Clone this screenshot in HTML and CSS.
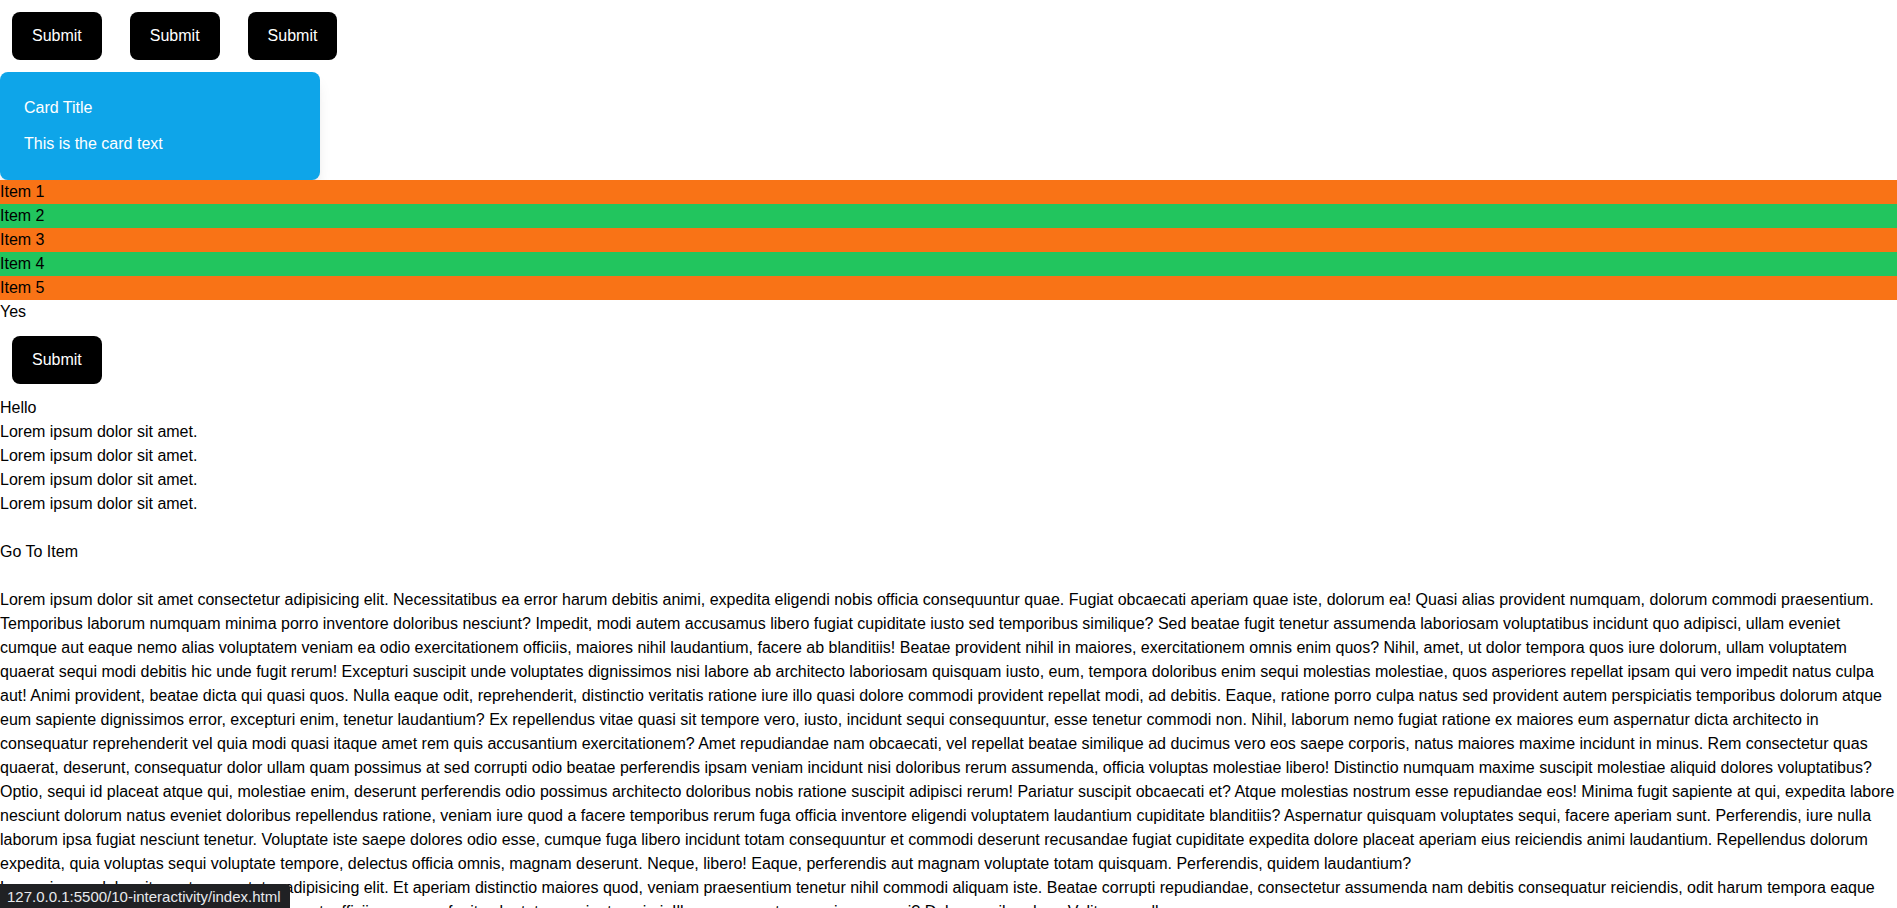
FILE: index.html
```html
<!DOCTYPE html>
<html lang="en">
<head>
<meta charset="utf-8">
<title>Interactivity</title>
<link rel="stylesheet" href="styles.css">
</head>
<body>
<div class="btn-row">
  <button class="btn">Submit</button>
  <button class="btn">Submit</button>
  <button class="btn">Submit</button>
</div>
<div class="card">
  <div class="card-title">Card Title</div>
  <div class="card-text">This is the card text</div>
</div>
<ul class="items">
  <li class="item odd">Item 1</li>
  <li class="item even">Item 2</li>
  <li class="item odd">Item 3</li>
  <li class="item even">Item 4</li>
  <li class="item odd">Item 5</li>
</ul>
<div class="line">Yes</div>
<div class="btn-row">
  <button class="btn">Submit</button>
</div>
<div class="line">Hello</div>
<div class="line">Lorem ipsum dolor sit amet.</div>
<div class="line">Lorem ipsum dolor sit amet.</div>
<div class="line">Lorem ipsum dolor sit amet.</div>
<div class="line">Lorem ipsum dolor sit amet.</div>
<div class="goto"><a class="goto-link">Go To Item</a></div>
<div class="text">
<p>Lorem ipsum dolor sit amet consectetur adipisicing elit. Necessitatibus ea error harum debitis animi, expedita eligendi nobis officia consequuntur quae. Fugiat obcaecati aperiam quae iste, dolorum ea! Quasi alias provident numquam, dolorum commodi praesentium. Temporibus laborum numquam minima porro inventore doloribus nesciunt? Impedit, modi autem accusamus libero fugiat cupiditate iusto sed temporibus similique? Sed beatae fugit tenetur assumenda laboriosam voluptatibus incidunt quo adipisci, ullam eveniet cumque aut eaque nemo alias voluptatem veniam ea odio exercitationem officiis, maiores nihil laudantium, facere ab blanditiis! Beatae provident nihil in maiores, exercitationem omnis enim quos? Nihil, amet, ut dolor tempora quos iure dolorum, ullam voluptatem quaerat sequi modi debitis hic unde fugit rerum! Excepturi suscipit unde voluptates dignissimos nisi labore ab architecto laboriosam quisquam iusto, eum, tempora doloribus enim sequi molestias molestiae, quos asperiores repellat ipsam qui vero impedit natus culpa aut! Animi provident, beatae dicta qui quasi quos. Nulla eaque odit, reprehenderit, distinctio veritatis ratione iure illo quasi dolore commodi provident repellat modi, ad debitis. Eaque, ratione porro culpa natus sed provident autem perspiciatis temporibus dolorum atque eum sapiente dignissimos error, excepturi enim, tenetur laudantium? Ex repellendus vitae quasi sit tempore vero, iusto, incidunt sequi consequuntur, esse tenetur commodi non. Nihil, laborum nemo fugiat ratione ex maiores eum aspernatur dicta architecto in consequatur reprehenderit vel quia modi quasi itaque amet rem quis accusantium exercitationem? Amet repudiandae nam obcaecati, vel repellat beatae similique ad ducimus vero eos saepe corporis, natus maiores maxime incidunt in minus. Rem consectetur quas quaerat, deserunt, consequatur dolor ullam quam possimus at sed corrupti odio beatae perferendis ipsam veniam incidunt nisi doloribus rerum assumenda, officia voluptas molestiae libero! Distinctio numquam maxime suscipit molestiae aliquid dolores voluptatibus? Optio, sequi id placeat atque qui, molestiae enim, deserunt perferendis odio possimus architecto doloribus nobis ratione suscipit adipisci rerum! Pariatur suscipit obcaecati et? Atque molestias nostrum esse repudiandae eos! Minima fugit sapiente at qui, expedita labore nesciunt dolorum natus eveniet doloribus repellendus ratione, veniam iure quod a facere temporibus rerum fuga officia inventore eligendi voluptatem laudantium cupiditate blanditiis? Aspernatur quisquam voluptates sequi, facere aperiam sunt. Perferendis, iure nulla laborum ipsa fugiat nesciunt tenetur. Voluptate iste saepe dolores odio esse, cumque fuga libero incidunt totam consequuntur et commodi deserunt recusandae fugiat cupiditate expedita dolore placeat aperiam eius reiciendis animi laudantium. Repellendus dolorum expedita, quia voluptas sequi voluptate tempore, delectus officia omnis, magnam deserunt. Neque, libero! Eaque, perferendis aut magnam voluptate totam quisquam. Perferendis, quidem laudantium?</p>
<p>Lorem ipsum dolor sit amet consectetur adipisicing elit. Et aperiam distinctio maiores quod, veniam praesentium tenetur nihil commodi aliquam iste. Beatae corrupti repudiandae, consectetur assumenda nam debitis consequatur reiciendis, odit harum tempora eaque quasi nobis soluta ipsam deleniti numquam et, officiis magnam fugit voluptates sapiente animi. Illum quas nostrum maiores sequi? Dolore, quibusdam. Velit, nam ullam.</p>
</div>
<div class="status">127.0.0.1:5500/10-interactivity/index.html</div>
</body>
</html>
```
FILE: styles.css
```css
html {
  scrollbar-width: none;
}
html::-webkit-scrollbar {
  display: none;
}
body {
  margin: 0;
  font-family: "Liberation Sans", Arial, sans-serif;
  font-size: 16px;
  line-height: 24px;
  color: #000;
  background: #fff;
}
.btn-row {
  display: flex;
  gap: 4px;
}
.btn {
  margin: 12px;
  padding: 12px 20px;
  border: 0;
  border-radius: 8px;
  background: #000;
  color: #fff;
  font-family: inherit;
  font-size: 16px;
  line-height: 24px;
  cursor: pointer;
}
.card {
  width: 320px;
  box-sizing: border-box;
  padding: 24px;
  display: flex;
  flex-direction: column;
  gap: 12px;
  background: #0ea5e9;
  color: #fff;
  border-radius: 8px;
  box-shadow: 0 10px 15px -3px rgba(0,0,0,0.1), 0 4px 6px -4px rgba(0,0,0,0.1);
}
.items {
  list-style: none;
  margin: 0;
  padding: 0;
}
.item {
  height: 24px;
}
.odd {
  background: #f97316;
}
.even {
  background: #22c55e;
}
.goto {
  margin: 24px 0;
}
.goto-link {
  color: inherit;
  text-decoration: none;
}
.text p {
  margin: 0;
}
.status {
  position: fixed;
  left: 0;
  bottom: 0;
  height: 24px;
  padding: 0 9px 0 7px;
  background: #202124;
  color: #e8eaed;
  font-size: 15px;
  line-height: 26px;
  border-top-right-radius: 4px;
}
```
